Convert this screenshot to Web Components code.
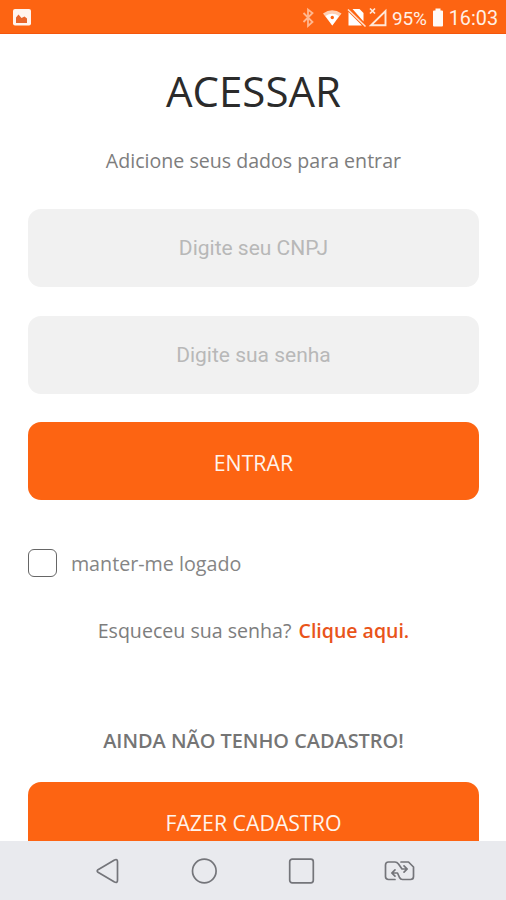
<!DOCTYPE html>
<html lang="pt-BR">
<head>
<meta charset="utf-8">
<meta name="viewport" content="width=device-width, initial-scale=1">
<title>Acessar</title>
<style>
  body {
    margin: 0;
    background: #ffffff;
    font-family: "Open Sans", "Noto Sans", sans-serif;
  }
</style>
</head>
<body>
<login-screen>
  <status-bar slot="status" battery="95%" time="16:03"></status-bar>
  <login-form></login-form>
  <nav-bar slot="nav"></nav-bar>
</login-screen>

<script>
(function registerLoginScreen(globalScope) {
  function define(name, html, onConnect) {
    const template = document.createElement("template");
    template.innerHTML = html;

    globalScope.customElements.define(
      name,
      class extends HTMLElement {
        constructor() {
          super();
          this.attachShadow({ mode: "open" }).append(template.content.cloneNode(true));
        }

        connectedCallback() {
          if (onConnect) {
            onConnect(this, this.shadowRoot);
          }
        }
      },
    );
  }

  define("login-screen", `
    <style>
      :host {
        display: flex;
        flex-direction: column;
        height: 900px;
        overflow: hidden;
      }

      main {
        flex: 1;
        min-height: 0;
        overflow: hidden;
      }
    </style>
    <slot name="status"></slot>
    <main><slot></slot></main>
    <slot name="nav"></slot>
  `);

  define("status-bar", `
    <style>
      :host {
        display: flex;
        flex: none;
        justify-content: space-between;
        box-sizing: border-box;
        height: 34px;
        padding: 0 8px 0 13px;
        border-bottom: 1px solid #f4560c;
        background: #fd6412;
        color: #fff0e6;
        font: 19px/37px Roboto, sans-serif;
      }

      .photo {
        margin-top: 9px;
      }

      .right {
        display: flex;
      }

      svg {
        display: block;
        flex: none;
      }

      .battery {
        margin: 0 5px 0 2px;
        letter-spacing: -0.2px;
      }

      .time {
        margin-left: 5px;
        font-size: 19.8px;
      }
    </style>
    <svg class="photo" width="18" height="17" viewBox="0 0 18 17" aria-hidden="true">
      <rect width="18" height="16.5" rx="2" fill="#fff4ee"></rect>
      <path d="M3 14V8.500L5.500 5.500L8.500 9L11.500 7.500L14 9.500V14z" fill="#e8652a"></path>
    </svg>
    <div class="right">
      <svg width="93" height="33" viewBox="0 0 93 33" aria-hidden="true">
        <path d="M6.500 13l9 9-4.500 4V9.500L15.500 13l-9 9" fill="none" stroke="#ffb78f" stroke-width="1.8"></path>
        <path d="M26 13.500Q35 7 44.500 13.500L35.300 25.500z" fill="#ffd0b4"></path>
        <path d="M28.500 16Q35 11.500 42 16L35.300 25.500z" fill="#fff"></path>
        <circle cx="35.300" cy="17.500" r="1.700" fill="#fd6412"></circle>
        <path d="M55.500 9H62.500L66.500 13V21.500zM51.500 12L65 25.500H51.500z" fill="#fff"></path>
        <path d="M51 9.500L68.500 26.500" stroke="#ffe2d1" stroke-width="1.600"></path>
        <path d="M88.500 11V25.200H74z" fill="none" stroke="#ffe8da" stroke-width="1.900"></path>
        <path d="M73 8.500l5 5m0-5l-5 5" stroke="#ffe8da" stroke-width="1.700"></path>
      </svg>
      <span class="battery"></span>
      <svg width="12" height="33" viewBox="0 0 12 33" aria-hidden="true">
        <path d="M3.500 8.500h5v2H10a1 1 0 0 1 1 1v14a1 1 0 0 1-1 1H2a1 1 0 0 1-1-1v-14a1 1 0 0 1 1-1h1.500z" fill="#fffaf6"></path>
      </svg>
      <span class="time"></span>
    </div>
  `, (host, root) => {
    root.querySelector(".battery").textContent = host.getAttribute("battery");
    root.querySelector(".time").textContent = host.getAttribute("time");
  });

  define("text-field", `
    <style>
      :host {
        display: block;
      }

      input {
        display: block;
        box-sizing: border-box;
        width: 100%;
        height: 78px;
        padding: 0 20px;
        border: 0;
        border-radius: 13px;
        background: #f1f1f1;
        color: #555555;
        font: 21px Roboto, sans-serif;
        text-align: center;
        outline: none;
      }

      input::placeholder {
        color: #b8b8b8;
        opacity: 1;
      }
    </style>
    <input>
  `, (host, root) => {
    const input = root.querySelector("input");
    input.placeholder = host.getAttribute("placeholder") || "";
    input.type = host.getAttribute("type") || "text";
  });

  define("action-button", `
    <style>
      :host {
        display: block;
      }

      button {
        display: block;
        width: 100%;
        height: 78px;
        padding: 2px 0 0;
        border: 0;
        border-radius: 13px;
        background: #fd6412;
        color: #fff3ec;
        font: 21.300px "Open Sans", sans-serif;
        cursor: pointer;
      }
    </style>
    <button type="button"><slot></slot></button>
  `);

  define("check-option", `
    <style>
      :host {
        display: block;
      }

      label {
        display: flex;
        align-items: center;
        gap: 14px;
        height: 28px;
        color: #858585;
        font-size: 19.700px;
      }

      input {
        appearance: none;
        box-sizing: border-box;
        width: 28.500px;
        height: 28px;
        margin: 0;
        border: 1.500px solid #666666;
        border-radius: 6px;
      }

      input:checked {
        background: #fd6412;
      }

      span {
        padding-top: 2px;
      }
    </style>
    <label><input type="checkbox"><span><slot></slot></span></label>
  `);

  define("login-form", `
    <style>
      :host {
        display: flex;
        flex-direction: column;
        padding: 28px 27.500px 0 28.400px;
        color: #7d7d7d;
        font-size: 19.600px;
        line-height: 28px;
        text-align: center;
      }

      h1 {
        margin: 0;
        color: #2b2b2b;
        font-size: 42px;
        font-weight: 400;
        line-height: 58px;
      }

      p {
        margin: 27px 0 34px;
      }

      .stack {
        display: grid;
        gap: 28.500px;
      }

      check-option {
        margin-top: 49px;
      }

      .forgot {
        margin: 40px 0 0;
      }

      a {
        margin-left: 2px;
        color: #e9541a;
        font-size: 19.500px;
        font-weight: 600;
        text-decoration: none;
      }

      h2 {
        margin: 82px 0 27.400px;
        color: #757575;
        font-size: 19.900px;
        font-weight: 550;
        line-height: 28px;
      }
    </style>
    <h1>ACESSAR</h1>
    <p>Adicione seus dados para entrar</p>
    <div class="stack">
      <text-field placeholder="Digite seu CNPJ"></text-field>
      <text-field placeholder="Digite sua senha" type="password"></text-field>
      <action-button>ENTRAR</action-button>
    </div>
    <check-option>manter-me logado</check-option>
    <p class="forgot">Esqueceu sua senha? <a href="#">Clique aqui.</a></p>
    <h2>AINDA NÃO TENHO CADASTRO!</h2>
    <action-button>FAZER CADASTRO</action-button>
  `);

  define("nav-bar", `
    <style>
      :host {
        display: flex;
        flex: none;
        align-items: center;
        justify-content: space-between;
        box-sizing: border-box;
        height: 59px;
        padding: 0 90px 0 95px;
        background: #e9eaee;
      }

      svg {
        display: block;
        fill: none;
        stroke: #74757a;
        stroke-width: 1.700;
        stroke-linecap: round;
        stroke-linejoin: round;
      }
    </style>
    <svg width="26" height="28" viewBox="0 0 26 28"><path d="M3 12.700L19.500 3Q22.500 1.800 22.500 4.800V23.200Q22.500 26.200 19.500 25L3 15.300Q1.400 14 3 12.700z"></path></svg>
    <svg width="28" height="28" viewBox="0 0 28 28"><circle cx="14.300" cy="14" r="11.800"></circle></svg>
    <svg width="28" height="28" viewBox="0 0 28 28"><rect x="2.700" y="2.200" width="23.600" height="23.600" rx="2.500"></rect></svg>
    <svg width="32" height="28" viewBox="0 0 32 28">
      <path d="M11 22.500H4.500Q1.500 22.500 1.500 19.500V8Q1.500 5 4.500 5H11Q13 5 14.500 7L18 12H22.500M20 8.800L23.200 12L20 15.200"></path>
      <path d="M17 5H24.500L29.500 10V19.500Q29.500 22.500 26.500 22.500H18.500Q16.500 22.500 15.500 20.500L13.500 16H8.500M11 12.800L7.800 16L11 19.200"></path>
    </svg>
  `);
})(window);
</script>
</body>
</html>
